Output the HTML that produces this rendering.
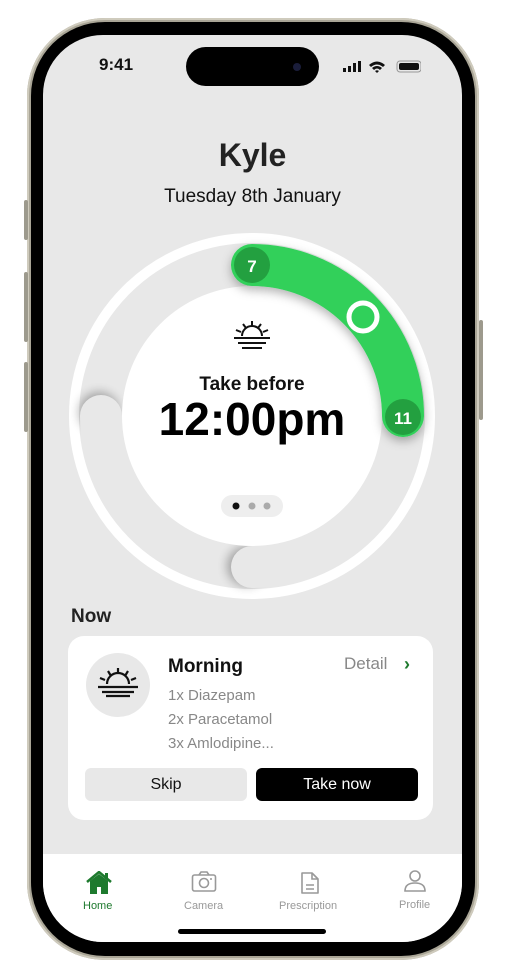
<!DOCTYPE html>
<html><head><style>
body{margin:0;width:508px;height:974px;background:#fff;position:relative;overflow:hidden;font-family:"Liberation Sans",sans-serif}
.frame{position:absolute;left:27px;top:18px;width:452px;height:942px;border-radius:78px;background:#a9a596;box-shadow:inset 0 0 0 2px #cfcbbd}
.bezel{position:absolute;left:31px;top:22px;width:444px;height:934px;border-radius:74px;background:#000}
.screen{position:absolute;left:43px;top:35px;width:419px;height:907px;border-radius:60px;background:#e8e8e8;overflow:hidden}
.btn{position:absolute;background:#9d9a8d;width:4px;border-radius:2px}
.abs{position:absolute}
</style></head><body>
<div class="frame"></div>
<div class="btn" style="left:24px;top:200px;height:40px"></div>
<div class="btn" style="left:24px;top:272px;height:70px"></div>
<div class="btn" style="left:24px;top:362px;height:70px"></div>
<div class="btn" style="left:479px;top:320px;height:100px"></div>
<div class="bezel"></div>
<div class="screen">
  <div class="abs" style="left:56px;top:20px;font-size:17px;font-weight:bold;color:#111">9:41</div>
  <div class="abs" style="left:143px;top:12px;width:133px;height:39px;border-radius:20px;background:#000"></div>
  <div class="abs" style="left:250px;top:28px;width:8px;height:8px;border-radius:50%;background:#1a1d3a"></div>
  <svg class="abs" style="left:298px;top:24px" width="80" height="16" viewBox="0 0 80 16">
    <rect x="2" y="9" width="3" height="4" fill="#111"/><rect x="7" y="7" width="3" height="6" fill="#111"/><rect x="12" y="4" width="3" height="9" fill="#111"/><rect x="17" y="2" width="3" height="11" fill="#111"/>
    <path d="M28 6 Q36 -1 44 6 L42 8 Q36 3 30 8Z M31 9 Q36 5 41 9 L39 11 Q36 8 33 11Z M34 12 L36 14 L38 12 Q36 10.5 34 12Z" fill="#111"/>
    <rect x="56" y="2" width="24" height="11" rx="3" fill="none" stroke="#999" stroke-width="1"/><rect x="58" y="4" width="20" height="7" rx="2" fill="#111"/>
  </svg>
  <div class="abs" style="left:0;width:419px;top:102px;text-align:center;font-size:32px;font-weight:bold;color:#222">Kyle</div>
  <div class="abs" style="left:0;width:419px;top:151px;text-align:center;font-size:19px;color:#111">Tuesday 8th January</div>
  <svg class="abs" style="left:0;top:0" width="419" height="600" viewBox="0 0 419 600">
    <defs><filter id="sh" x="-50%" y="-50%" width="200%" height="200%"><feDropShadow dx="0" dy="4" stdDeviation="5" flood-color="#000" flood-opacity="0.3"/></filter>
    <filter id="bl" x="-50%" y="-50%" width="200%" height="200%"><feGaussianBlur stdDeviation="5"/></filter></defs>
    <circle cx="209" cy="381" r="178" fill="#e8e8e8" stroke="#fff" stroke-width="10"/>
    <circle cx="56" cy="377" r="20" fill="#000" opacity="0.3" filter="url(#bl)"/>
    <path d="M58 381 A151 151 0 0 0 209 532" fill="none" stroke="#e8e8e8" stroke-width="42" stroke-linecap="round"/>
    <circle cx="204" cy="531" r="20" fill="#000" opacity="0.3" filter="url(#bl)"/>
    <path d="M209 532 A151 151 0 0 0 360 381" fill="none" stroke="#e8e8e8" stroke-width="42" stroke-linecap="round"/>
    <circle cx="209" cy="381" r="130" fill="#fff"/>
    <path d="M209 230 A151 151 0 0 1 360 381" fill="none" stroke="#30d05a" stroke-width="42" stroke-linecap="round" filter="url(#sh)"/>
    <circle cx="209" cy="230" r="18" fill="#23a040"/>
    <text x="209" y="237" text-anchor="middle" font-size="17" font-weight="bold" fill="#fff" font-family="Liberation Sans">7</text>
    <circle cx="360" cy="382" r="18" fill="#23a040"/>
    <text x="360" y="389" text-anchor="middle" font-size="17" font-weight="bold" fill="#fff" font-family="Liberation Sans">11</text>
    <circle cx="320" cy="282" r="14" fill="#30d05a" stroke="#fff" stroke-width="5"/>
    <g stroke="#111" stroke-width="2" fill="none">
      <path d="M191 303 H227 M195 308 H223 M199 313 H219"/>
      <path d="M199 301 A10 10 0 0 1 219 301"/>
      <path d="M209 286 V291 M200 289 L203 293 M218 289 L215 293 M193 295 L198 297 M225 295 L220 297"/>
    </g>
    <text x="209" y="355" text-anchor="middle" font-size="19" font-weight="bold" fill="#111" font-family="Liberation Sans">Take before</text>
    <text x="209" y="400" text-anchor="middle" font-size="46" font-weight="bold" fill="#000" font-family="Liberation Sans">12:00pm</text>
    <rect x="178" y="460" width="62" height="22" rx="11" fill="#eee"/>
    <circle cx="193" cy="471" r="3.5" fill="#111"/><circle cx="209" cy="471" r="3.5" fill="#aaa"/><circle cx="224" cy="471" r="3.5" fill="#aaa"/>
  </svg>
  <div class="abs" style="left:28px;top:571px;font-size:19px;font-weight:bold;color:#222">Now</div>
  <div class="abs" style="left:25px;top:601px;width:365px;height:184px;border-radius:16px;background:#fff">
    <div class="abs" style="left:18px;top:17px;width:64px;height:64px;border-radius:50%;background:#e8e8e8"></div>
    <svg class="abs" style="left:18px;top:17px" width="64" height="64" viewBox="0 0 64 64"><g stroke="#111" stroke-width="2.2" fill="none">
      <path d="M12 34 H52 M16 39 H48 M20 43 H44"/><path d="M21 31 A11 11 0 0 1 43 31"/>
      <path d="M32 15 V21 M22 18 L25 23 M42 18 L39 23 M14 25 L19 27 M50 25 L45 27"/></g></svg>
    <div class="abs" style="left:100px;top:20px;font-size:19px;font-weight:bold;color:#111">Morning</div>
    <div class="abs" style="left:276px;top:18px;font-size:17px;color:#888">Detail</div>
    <div class="abs" style="left:336px;top:18px;font-size:18px;font-weight:bold;color:#1e7a2e">›</div>
    <div class="abs" style="left:100px;top:48px;font-size:15px;color:#888;line-height:24px">1x Diazepam<br>2x Paracetamol<br>3x Amlodipine...</div>
    <div class="abs" style="left:17px;top:132px;width:162px;height:33px;border-radius:6px;background:#e8e8e8;text-align:center;line-height:33px;font-size:16px;color:#111">Skip</div>
    <div class="abs" style="left:188px;top:132px;width:162px;height:33px;border-radius:6px;background:#000;text-align:center;line-height:33px;font-size:16px;color:#fff">Take now</div>
  </div>
  <div class="abs" style="left:0;top:819px;width:419px;height:88px;background:#fff"></div>
  <svg class="abs" style="left:43px;top:836px" width="26" height="24" viewBox="0 0 26 24"><path d="M1 11 L13 1 L25 11" fill="none" stroke="#1e7a2e" stroke-width="2.5"/><path d="M4 10 L13 3 L22 10 V23 H15 V16 H11 V23 H4Z" fill="#1e7a2e"/><rect x="19" y="2" width="3" height="6" fill="#1e7a2e"/></svg>
  <div class="abs" style="left:40px;top:865px;font-size:11px;color:#1e7a2e">Home</div>
  <svg class="abs" style="left:148px;top:836px" width="26" height="22" viewBox="0 0 26 22"><rect x="1.5" y="4" width="23" height="16" rx="2" fill="none" stroke="#999" stroke-width="1.6"/><path d="M8 4 L10 1 H16 L18 4" fill="none" stroke="#999" stroke-width="1.6"/><circle cx="13" cy="12" r="4.5" fill="none" stroke="#999" stroke-width="1.6"/><circle cx="20" cy="8" r="1" fill="#999"/></svg>
  <div class="abs" style="left:141px;top:865px;font-size:11px;color:#999">Camera</div>
  <svg class="abs" style="left:257px;top:836px" width="20" height="24" viewBox="0 0 20 24"><path d="M2 2 H12 L18 8 V22 H2Z" fill="none" stroke="#999" stroke-width="1.6" stroke-linejoin="round"/><path d="M12 2 V8 H18 M6 14 H14 M6 18 H14" fill="none" stroke="#999" stroke-width="1.6"/></svg>
  <div class="abs" style="left:236px;top:865px;font-size:11px;color:#999">Prescription</div>
  <svg class="abs" style="left:360px;top:834px" width="24" height="24" viewBox="0 0 24 24"><circle cx="12" cy="7" r="5" fill="none" stroke="#999" stroke-width="1.6"/><path d="M2 22 Q2 14 12 14 Q22 14 22 22Z" fill="none" stroke="#999" stroke-width="1.6"/></svg>
  <div class="abs" style="left:356px;top:864px;font-size:11px;color:#999">Profile</div>
  <div class="abs" style="left:135px;top:894px;width:148px;height:5px;border-radius:3px;background:#000"></div>
</div>
</body></html>
